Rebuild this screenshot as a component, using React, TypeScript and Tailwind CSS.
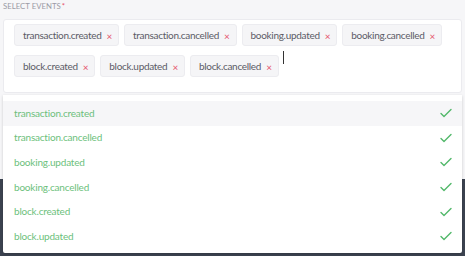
import React from "react";

const chips1 = ["transaction.created", "transaction.cancelled", "booking.updated", "booking.cancelled"];
const chips2 = ["block.created", "block.updated", "block.cancelled"];
const options = [
  "transaction.created",
  "transaction.cancelled",
  "booking.updated",
  "booking.cancelled",
  "block.created",
  "block.updated",
];

function Chip({ label }: { label: string }) {
  return (
    <div className="flex items-center h-[22px] pl-[8px] pr-[6px] bg-[#f5f5f7] border border-[#ececf0] rounded-[3px] text-[10px] tracking-[-0.3px] text-[#5b5b66]">
      <span className="leading-none">{label}</span>
      <span className="ml-[5px] text-[#e5536b] text-[10px] leading-none mt-[2px]">×</span>
    </div>
  );
}

function Check() {
  return (
    <svg width="12" height="10" viewBox="0 0 12 10" fill="none">
      <path d="M1 5.5 L4 8.5 L11 1.5" stroke="#52b86a" strokeWidth="1.4" strokeLinecap="round" strokeLinejoin="round" />
    </svg>
  );
}

export default function App() {
  return (
    <div className="w-[465px] h-[256px] flex flex-col overflow-hidden" style={{ fontFamily: "Lato, 'Open Sans', sans-serif" }}>
      <div className="h-[179px] bg-[#f6f6f8] px-[3px] pt-[1px]">
        <div className="text-[7.8px] leading-[9px] text-[#9b9ba5] uppercase h-[18px] pt-[1px]">
          Select events<span className="text-[#e5536b] ml-[1px]">*</span>
        </div>
        <div className="relative w-[459px] h-[74px] bg-white border border-[#ebebef] rounded-[3px] pl-[10px] pt-[4px]">
          <div className="flex gap-[5px]">
            {chips1.map((c) => (
              <Chip key={c} label={c} />
            ))}
          </div>
          <div className="flex gap-[5px] mt-[9px] items-start">
            {chips2.map((c) => (
              <Chip key={c} label={c} />
            ))}
            <div className="w-[1px] h-[13px] bg-[#333] -mt-[4px] ml-[-1px]" />
          </div>
          <div className="absolute left-[-1px] top-[75px] w-[459px] bg-white pt-[6px] pb-[4px] shadow-[0_1px_3px_rgba(0,0,0,0.18)] rounded-b-[2px]">
            {options.map((o, i) => (
              <div
                key={o}
                className={`flex items-center justify-between h-[24.6px] pl-[11px] pr-[10px] text-[10px] tracking-[-0.2px] text-[#6cbf7c] ${i === 0 ? "bg-[#f6f6f8]" : ""}`}
              >
                <span>{o}</span>
                <Check />
              </div>
            ))}
          </div>
        </div>
      </div>
      <div className="flex-1 bg-[#3c4350]" />
    </div>
  );
}
